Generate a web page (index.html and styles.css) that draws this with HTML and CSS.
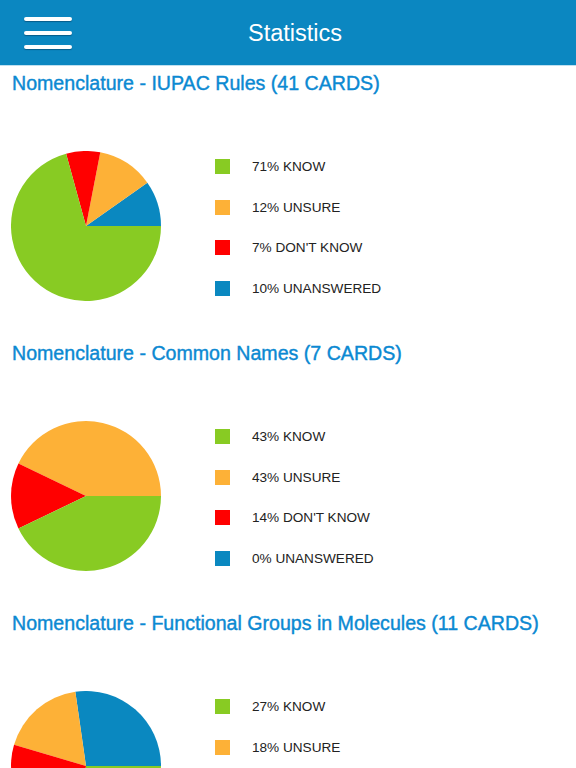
FILE: index.html
```html
<!DOCTYPE html>
<html lang="en">
<head>
<meta charset="utf-8">
<title>Statistics</title>
<link rel="stylesheet" href="styles.css">
</head>
<body>
<header class="topbar">
  <button class="menu" aria-label="Menu">
    <span class="bar"></span><span class="bar"></span><span class="bar"></span>
  </button>
  <h1 class="topbar-title">Statistics</h1>
</header>

<section class="deck">
  <h2 class="deck-title">Nomenclature - IUPAC Rules (41 CARDS)</h2>
  <div class="chart-row">
    <svg class="pie" viewBox="-75 -75 150 150" width="150" height="150">
      <path class="s-blue" d="M0 0 L75 0 A75 75 0 0 0 61.34 -43.15 Z"/>
      <path class="s-orange" d="M0 0 L61.34 -43.15 A75 75 0 0 0 14.29 -73.63 Z"/>
      <path class="s-red" d="M0 0 L14.29 -73.63 A75 75 0 0 0 -19.88 -72.32 Z"/>
      <path class="s-green" d="M0 0 L-19.88 -72.32 A75 75 0 1 0 75 0 Z"/>
    </svg>
    <ul class="legend">
      <li class="legend-item"><span class="swatch c-green"></span>71% KNOW</li>
      <li class="legend-item"><span class="swatch c-orange"></span>12% UNSURE</li>
      <li class="legend-item"><span class="swatch c-red"></span>7% DON'T KNOW</li>
      <li class="legend-item"><span class="swatch c-blue"></span>10% UNANSWERED</li>
    </ul>
  </div>
</section>

<section class="deck">
  <h2 class="deck-title">Nomenclature - Common Names (7 CARDS)</h2>
  <div class="chart-row">
    <svg class="pie" viewBox="-75 -75 150 150" width="150" height="150">
      <path class="s-orange" d="M0 0 L75 0 A75 75 0 0 0 -67.57 -32.54 Z"/>
      <path class="s-red" d="M0 0 L-67.57 -32.54 A75 75 0 0 0 -67.57 32.54 Z"/>
      <path class="s-green" d="M0 0 L-67.57 32.54 A75 75 0 0 0 75 0 Z"/>
    </svg>
    <ul class="legend">
      <li class="legend-item"><span class="swatch c-green"></span>43% KNOW</li>
      <li class="legend-item"><span class="swatch c-orange"></span>43% UNSURE</li>
      <li class="legend-item"><span class="swatch c-red"></span>14% DON'T KNOW</li>
      <li class="legend-item"><span class="swatch c-blue"></span>0% UNANSWERED</li>
    </ul>
  </div>
</section>

<section class="deck">
  <h2 class="deck-title">Nomenclature - Functional Groups in Molecules (11 CARDS)</h2>
  <div class="chart-row">
    <svg class="pie" viewBox="-75 -75 150 150" width="150" height="150">
      <path class="s-blue" d="M0 0 L75 0 A75 75 0 0 0 -10.67 -74.24 Z"/>
      <path class="s-orange" d="M0 0 L-10.67 -74.24 A75 75 0 0 0 -71.96 -21.13 Z"/>
      <path class="s-red" d="M0 0 L-71.96 -21.13 A75 75 0 0 0 -10.67 74.24 Z"/>
      <path class="s-green" d="M0 0 L-10.67 74.24 A75 75 0 0 0 75 0 Z"/>
    </svg>
    <ul class="legend">
      <li class="legend-item"><span class="swatch c-green"></span>27% KNOW</li>
      <li class="legend-item"><span class="swatch c-orange"></span>18% UNSURE</li>
      <li class="legend-item"><span class="swatch c-red"></span>27% DON'T KNOW</li>
      <li class="legend-item"><span class="swatch c-blue"></span>27% UNANSWERED</li>
    </ul>
  </div>
</section>
</body>
</html>
```

FILE: styles.css
```css
html, body {
  margin: 0;
  padding: 0;
  background: #ffffff;
  overflow: hidden;
}

body {
  font-family: "Liberation Sans", Arial, Helvetica, sans-serif;
  color: #222222;
}

.topbar {
  height: 65px;
  background: #0b87c1;
  border-bottom: 1px solid #bfe0f0;
  display: flex;
  align-items: center;
}

.menu {
  width: 48px;
  height: 32px;
  margin-left: 24px;
  padding: 0;
  border: 0;
  background: transparent;
  display: flex;
  flex-direction: column;
  justify-content: space-between;
}

.bar {
  display: block;
  width: 48px;
  height: 4px;
  border-radius: 2px;
  background: #ffffff;
  box-shadow: 0 1px 1px rgba(0, 40, 70, 0.45);
}

.topbar-title {
  flex: 1;
  margin: 0 0 0 -58px;
  padding-top: 2px;
  text-align: center;
  font-weight: normal;
  font-size: 23.5px;
  color: #ffffff;
}

.deck {
  padding: 5px 0 35px 0;
}

.deck-title {
  margin: 0 0 0 12px;
  font-size: 19.6px;
  line-height: 24px;
  font-weight: normal;
  color: #0b89d2;
  white-space: nowrap;
  -webkit-text-stroke: 0.4px #0b89d2;
}

.chart-row {
  margin-top: 56px;
  height: 150px;
  display: flex;
  align-items: center;
}

.pie {
  display: block;
  margin-left: 11px;
  flex: none;
}

.s-green { fill: #88cb23; }
.s-orange { fill: #fdb137; }
.s-red { fill: #ff0000; }
.s-blue { fill: #0a88c0; }

.legend {
  list-style: none;
  margin: 3px 0 0 54px;
  padding: 0;
  display: grid;
  grid-auto-rows: 40.7px;
}

.legend-item {
  display: flex;
  align-items: center;
  font-size: 13.6px;
  color: #222222;
}

.swatch {
  width: 15px;
  height: 15px;
  margin-right: 22px;
  flex: none;
}

.c-green { background: #88cb23; }
.c-orange { background: #fdb137; }
.c-red { background: #ff0000; }
.c-blue { background: #0a88c0; }
```
